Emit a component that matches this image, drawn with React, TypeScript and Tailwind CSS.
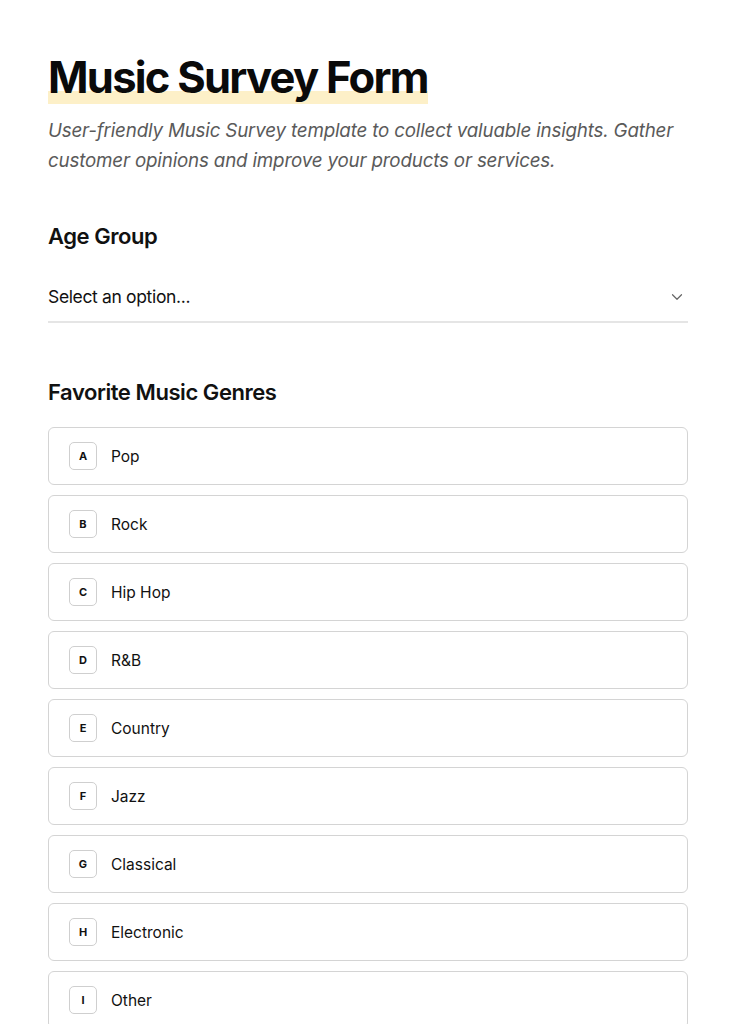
import { ChevronDown } from "lucide-react";

const genres = [
  { key: "A", label: "Pop" },
  { key: "B", label: "Rock" },
  { key: "C", label: "Hip Hop" },
  { key: "D", label: "R&B" },
  { key: "E", label: "Country" },
  { key: "F", label: "Jazz" },
  { key: "G", label: "Classical" },
  { key: "H", label: "Electronic" },
  { key: "I", label: "Other" },
];

function GenreOption({ letter, label }: { letter: string; label: string }) {
  return (
    <div className="flex h-[58px] items-center gap-[14px] rounded-md border border-[#d4d4d4] bg-white px-5">
      <span className="flex h-7 w-7 items-center justify-center rounded-[5px] border border-[#cfcfcf] text-[11px] font-bold text-[#111]">
        {letter}
      </span>
      <span className="text-[15.5px] text-[#111]">{label}</span>
    </div>
  );
}

export default function App() {
  return (
    <div
      className="min-h-screen bg-white px-12 pt-[50px] text-[#111]"
      style={{ fontFamily: '"Inter", "Liberation Sans", sans-serif' }}
    >
      {/* HEADER */}
      <div className="inline-block bg-[linear-gradient(to_bottom,transparent_0,transparent_41px,#fdf0c8_41px,#fdf0c8_54px,transparent_54px)]">
        <h1 className="text-[43.5px] font-bold leading-[54px] tracking-[-0.04em] text-[#0a0a0a]">
          Music Survey Form
        </h1>
      </div>
      <p className="mt-[12px] text-[18.8px] italic leading-[30px] tracking-[-0.01em] text-[#5a5a5a]">
        User-friendly Music Survey template to collect valuable insights. Gather customer opinions and improve your products or services.
      </p>

      {/* AGE GROUP */}
      <h2 className="mt-[46px] text-[22px] font-semibold leading-7 tracking-[-0.02em]">Age Group</h2>
      <div className="mt-[34px] flex items-center justify-between border-b-2 border-[#e5e5e5] pb-[11px]">
        <span className="text-[17.5px] tracking-[-0.02em] text-[#111]">Select an option...</span>
        <ChevronDown className="mr-[2px] h-[18px] w-[18px] text-[#666]" strokeWidth={1.6} />
      </div>

      {/* GENRES */}
      <h2 className="mt-[55px] text-[22px] font-semibold leading-7 tracking-[-0.02em]">Favorite Music Genres</h2>
      <div className="mt-[21px] flex flex-col gap-[10px] pb-10">
        {genres.map((g) => (
          <GenreOption key={g.key} letter={g.key} label={g.label} />
        ))}
      </div>
    </div>
  );
}
